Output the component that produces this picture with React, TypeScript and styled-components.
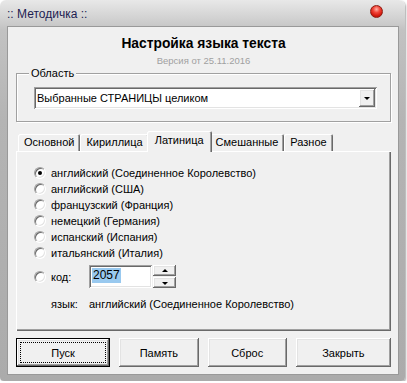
import React from "react";
import styled, { createGlobalStyle } from "styled-components";

const GlobalStyle = createGlobalStyle`
  html, body { margin: 0; padding: 0; background: #ffffff; }
  body {
    font-family: "Liberation Sans", Arial, sans-serif;
    font-size: 11px;
    color: #000;
  }
  * { box-sizing: border-box; }
`;

const Window = styled.div`
  width: 405px;
  height: 381px;
  display: flex;
  flex-direction: column;
  background: linear-gradient(#e8e8e8 0px, #d2d2d2 18px, #c2c2c2 30px, #b4b4b4 120px, #ababab 100%);
  border-radius: 6px 6px 4px 4px;
  box-shadow: 1px 1px 2px rgba(0, 0, 0, 0.35);
`;

const TitleBar = styled.div`
  height: 26px;
  flex: none;
  display: flex;
  align-items: center;
  justify-content: space-between;
  padding: 0 22px 0 7px;
`;

const TitleText = styled.span`
  font-size: 12px;
  color: #1d1d52;
  margin-top: 2px;
`;

const CloseBall = styled.span`
  width: 13px;
  height: 13px;
  margin-bottom: 4px;
  border-radius: 50%;
  border: 1px solid #8c1d12;
  background: radial-gradient(circle at 50% 30%, #ffb3a8 0%, #f2463a 35%, #d2180c 70%, #a30d05 100%);
`;

const Client = styled.div`
  margin-left: 7px;
  width: 392px;
  height: 349px;
  background: #f0f0f0;
  border: 1px solid #999999;
  padding: 0 7px 0 8px;
  display: flex;
  flex-direction: column;
`;

const Heading = styled.div`
  margin-top: 9px;
  height: 16px;
  line-height: 16px;
  text-align: center;
  font-weight: bold;
  font-size: 13.8px;
`;

const Version = styled.div`
  margin-top: 2px;
  height: 13px;
  line-height: 13px;
  text-align: center;
  font-size: 9.5px;
  color: #a0a0a0;
`;

const GroupBox = styled.div`
  position: relative;
  margin-top: 6px;
  height: 49px;
  border: 1px solid #a0a0a0;
  box-shadow: inset 1px 1px 0 #ffffff, 1px 1px 0 #ffffff;
  padding: 13px 0 0 17px;
`;

const GroupLabel = styled.span`
  position: absolute;
  top: -7px;
  left: 12px;
  padding: 0 2px;
  background: #f0f0f0;
  line-height: 13px;
  font-size: 11px;
`;

const Combo = styled.div`
  width: 343px;
  height: 22px;
  background: #ffffff;
  display: flex;
  align-items: center;
  padding: 2px;
  box-shadow: inset 1px 1px 0 #a0a0a0, inset -1px -1px 0 #ffffff, inset 2px 2px 0 #696969,
    inset -2px -2px 0 #e3e3e3;
`;

const ComboText = styled.span`
  flex: 1;
  padding-left: 1px;
  line-height: 18px;
`;

const ArrowButton = styled.span<{ $h?: number }>`
  width: ${(p) => (p.$h ? 23 : 16)}px;
  height: ${(p) => p.$h ?? 18}px;
  display: flex;
  align-items: center;
  justify-content: center;
  background: #f0f0f0;
  box-shadow: inset -1px -1px 0 #696969, inset 1px 1px 0 #ffffff, inset -2px -2px 0 #a0a0a0,
    inset 2px 2px 0 #e3e3e3;
`;

const Triangle = styled.span<{ $up?: boolean }>`
  width: 0;
  height: 0;
  border-left: 3px solid transparent;
  border-right: 3px solid transparent;
  ${(p) => (p.$up ? "border-bottom: 3px solid #000;" : "border-top: 3px solid #000;")}
  margin-top: ${(p) => (p.$up ? "-1px" : "1px")};
`;

const TabStrip = styled.div`
  margin-top: 9px;
  height: 20px;
  display: flex;
  align-items: flex-end;
  padding-left: 2px;
  position: relative;
  z-index: 1;
`;

const Tab = styled.div<{ $active?: boolean }>`
  height: ${(p) => (p.$active ? 21 : 17)}px;
  margin: ${(p) => (p.$active ? "0 -2px -1px -2px" : "0")};
  padding: ${(p) => (p.$active ? "2px 8px 0 8px" : "0 6px")};
  line-height: ${(p) => (p.$active ? 15 : 17)}px;
  background: #f0f0f0;
  border-radius: 2px 2px 0 0;
  position: relative;
  z-index: ${(p) => (p.$active ? 2 : 1)};
  box-shadow: inset 1px 1px 0 #ffffff, inset -1px 0 0 #696969, inset -2px 0 0 #a0a0a0;
  white-space: nowrap;
`;

const Panel = styled.div`
  height: 180px;
  background: #f0f0f0;
  padding: 14px 0 0 18px;
  box-shadow: inset 1px 1px 0 #ffffff, inset -1px -1px 0 #696969, inset -2px -2px 0 #a0a0a0;
  display: flex;
  flex-direction: column;
`;

const OptionRow = styled.div<{ $h?: number; $mt?: number }>`
  height: ${(p) => p.$h ?? 16}px;
  margin-top: ${(p) => p.$mt ?? 0}px;
  display: flex;
  align-items: center;
  white-space: nowrap;
`;

const Radio = styled.span<{ $checked?: boolean }>`
  width: 12px;
  height: 12px;
  flex: none;
  margin-right: 5px;
  border-radius: 50%;
  background: #ffffff;
  border: 1px solid;
  border-color: #a0a0a0 #ffffff #ffffff #a0a0a0;
  box-shadow: inset 1px 1px 0 #696969, inset -1px -1px 0 #e3e3e3;
  display: flex;
  align-items: center;
  justify-content: center;
  &::after {
    content: "";
    width: 4px;
    height: 4px;
    border-radius: 50%;
    background: ${(p) => (p.$checked ? "#000" : "transparent")};
  }
`;

const FieldLabel = styled.span<{ $w: number }>`
  width: ${(p) => p.$w}px;
  flex: none;
`;

const SpinInput = styled.div`
  width: 63px;
  height: 23px;
  background: #ffffff;
  padding: 3px 0 0 3px;
  box-shadow: inset 1px 1px 0 #a0a0a0, inset -1px -1px 0 #ffffff, inset 2px 2px 0 #696969,
    inset -2px -2px 0 #e3e3e3;
`;

const Selected = styled.span`
  background: #99c9ef;
  font-size: 12px;
  line-height: 15px;
  display: inline-block;
  padding: 0 1px;
`;

const SpinButtons = styled.div`
  margin-left: 1px;
  display: flex;
  flex-direction: column;
  gap: 1px;
`;

const ButtonRow = styled.div`
  margin-top: 7px;
  display: flex;
  gap: 9px;
`;

const PushButton = styled.div<{ $w: number; $default?: boolean }>`
  position: relative;
  width: ${(p) => p.$w}px;
  height: 29px;
  display: flex;
  align-items: center;
  justify-content: center;
  background: #f0f0f0;
  border: ${(p) => (p.$default ? "1px solid #000" : "none")};
  box-shadow: inset -1px -1px 0 #696969, inset 1px 1px 0 #ffffff, inset -2px -2px 0 #a0a0a0,
    inset 2px 2px 0 #e3e3e3;
  ${(p) =>
    p.$default
      ? `&::after { content: ""; position: absolute; inset: 3px; border: 1px dotted #000; }`
      : ""}
`;

const options = [
  "английский (Соединенное Королевство)",
  "английский (США)",
  "французский (Франция)",
  "немецкий (Германия)",
  "испанский (Испания)",
  "итальянский (Италия)",
];

const tabs = ["Основной", "Кириллица", "Латиница", "Смешанные", "Разное"];

export default function App() {
  return (
    <>
      <GlobalStyle />
      <Window>
        <TitleBar>
          <TitleText>:: Методичка ::</TitleText>
          <CloseBall />
        </TitleBar>
        <Client>
          <Heading>Настройка языка текста</Heading>
          <Version>Версия от 25.11.2016</Version>
          <GroupBox>
            <GroupLabel>Область</GroupLabel>
            <Combo>
              <ComboText>Выбранные СТРАНИЦЫ целиком</ComboText>
              <ArrowButton>
                <Triangle />
              </ArrowButton>
            </Combo>
          </GroupBox>
          <TabStrip>
            {tabs.map((t) => (
              <Tab key={t} $active={t === "Латиница"}>
                {t}
              </Tab>
            ))}
          </TabStrip>
          <Panel>
            {options.map((o, i) => (
              <OptionRow key={o}>
                <Radio $checked={i === 0} />
                {o}
              </OptionRow>
            ))}
            <OptionRow $h={23} $mt={4}>
              <Radio />
              <FieldLabel $w={38}>код:</FieldLabel>
              <SpinInput>
                <Selected>2057</Selected>
              </SpinInput>
              <SpinButtons>
                <ArrowButton $h={11}>
                  <Triangle $up />
                </ArrowButton>
                <ArrowButton $h={11}>
                  <Triangle />
                </ArrowButton>
              </SpinButtons>
            </OptionRow>
            <OptionRow $mt={8}>
              <FieldLabel $w={17} />
              <FieldLabel $w={38}>язык:</FieldLabel>
              английский (Соединенное Королевство)
            </OptionRow>
          </Panel>
          <ButtonRow>
            <PushButton $w={95} $default>
              Пуск
            </PushButton>
            <PushButton $w={80}>Память</PushButton>
            <PushButton $w={80}>Сброс</PushButton>
            <PushButton $w={96}>Закрыть</PushButton>
          </ButtonRow>
        </Client>
      </Window>
    </>
  );
}
